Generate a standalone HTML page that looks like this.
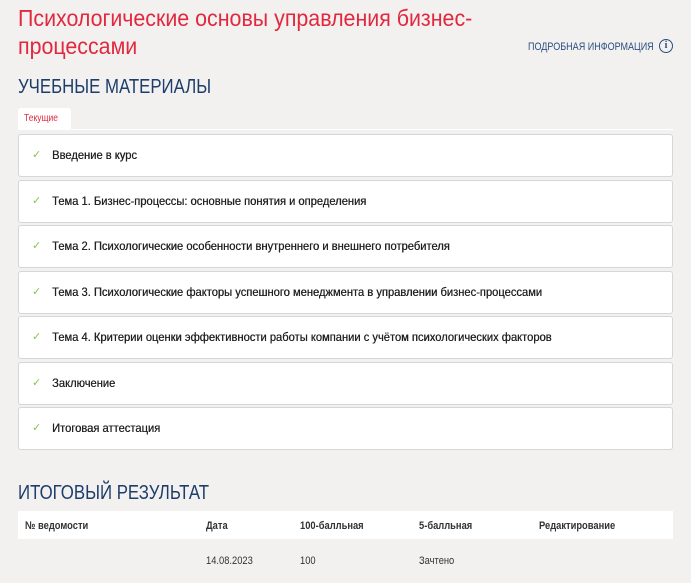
<!DOCTYPE html>
<html><head><meta charset="utf-8"><style>
*{box-sizing:border-box;margin:0;padding:0}
body{width:691px;height:583px;background:#f2f1f0;font-family:"Liberation Sans",sans-serif;overflow:hidden;position:relative;color:#333}
.s{display:inline-block;transform-origin:0 50%;white-space:nowrap}
.t{position:absolute;left:18px;top:4px;color:#e2283f;font-size:23px;line-height:28px}
.info{position:absolute;left:528px;top:41px;font-size:11px;color:#2a4f80;transform:scaleX(0.82);transform-origin:0 0;white-space:nowrap}
.ic{position:absolute;left:659px;top:39px;width:14px;height:14px;border:1.5px solid #2a4f80;border-radius:50%;font:bold 10px/11px "Liberation Serif",serif;color:#2a4f80;text-align:center}
h2{position:absolute;left:18px;font-weight:normal;font-size:20px;color:#1d3d6b;transform:scaleX(0.84);transform-origin:0 0;white-space:nowrap}
.tab{position:absolute;left:18px;top:108px;width:53px;height:21px;background:#fff;border-radius:3px 3px 0 0;color:#e2283f;font-size:10px;line-height:21px;padding-left:6px}
.ln{position:absolute;left:18px;top:129px;width:655px;height:1px;background:#fff}
.c{position:absolute;left:18px;width:655px;height:43px;background:#fff;border:1px solid #d6d6d6;border-radius:3px;font-size:12px;line-height:41px;color:#222;padding-left:33px}
.c .s{transform:scaleX(0.93);text-shadow:0.3px 0 0 #222}
.c:before{content:"✓";position:absolute;left:13px;color:#8bc34a;font-size:11px}
.th{position:absolute;left:18px;top:511px;width:655px;height:28px;background:#fff;font-size:11px;font-weight:bold;color:#333}
.th span,.r span{position:absolute;top:9px;transform:scaleX(0.85);transform-origin:0 0;white-space:nowrap}
.r{position:absolute;left:18px;top:546px;width:655px;font-size:11px;color:#333}
</style></head><body>
<div class="t"><span class="s" style="transform:scaleX(0.93)">Психологические основы управления бизнес-</span><br><span class="s" style="transform:scaleX(0.93)">процессами</span></div>
<div class="info">ПОДРОБНАЯ ИНФОРМАЦИЯ</div><div class="ic">i</div>
<h2 style="top:76px">УЧЕБНЫЕ МАТЕРИАЛЫ</h2>
<div class="tab"><span class="s" style="transform:scaleX(0.85)">Текущие</span></div><div class="ln"></div>
<div class="c" style="top:134px"><span class="s">Введение в курс</span></div>
<div class="c" style="top:180px"><span class="s">Тема 1. Бизнес-процессы: основные понятия и определения</span></div>
<div class="c" style="top:225px"><span class="s">Тема 2. Психологические особенности внутреннего и внешнего потребителя</span></div>
<div class="c" style="top:271px"><span class="s">Тема 3. Психологические факторы успешного менеджмента в управлении бизнес-процессами</span></div>
<div class="c" style="top:316px"><span class="s">Тема 4. Критерии оценки эффективности работы компании с учётом психологических факторов</span></div>
<div class="c" style="top:362px"><span class="s">Заключение</span></div>
<div class="c" style="top:407px"><span class="s">Итоговая аттестация</span></div>
<h2 style="top:482px">ИТОГОВЫЙ РЕЗУЛЬТАТ</h2>
<div class="th"><span style="left:7px">№ ведомости</span><span style="left:188px">Дата</span><span style="left:282px">100-балльная</span><span style="left:401px">5-балльная</span><span style="left:521px">Редактирование</span></div>
<div class="r"><span style="left:188px">14.08.2023</span><span style="left:282px">100</span><span style="left:401px">Зачтено</span></div>
</body></html>
